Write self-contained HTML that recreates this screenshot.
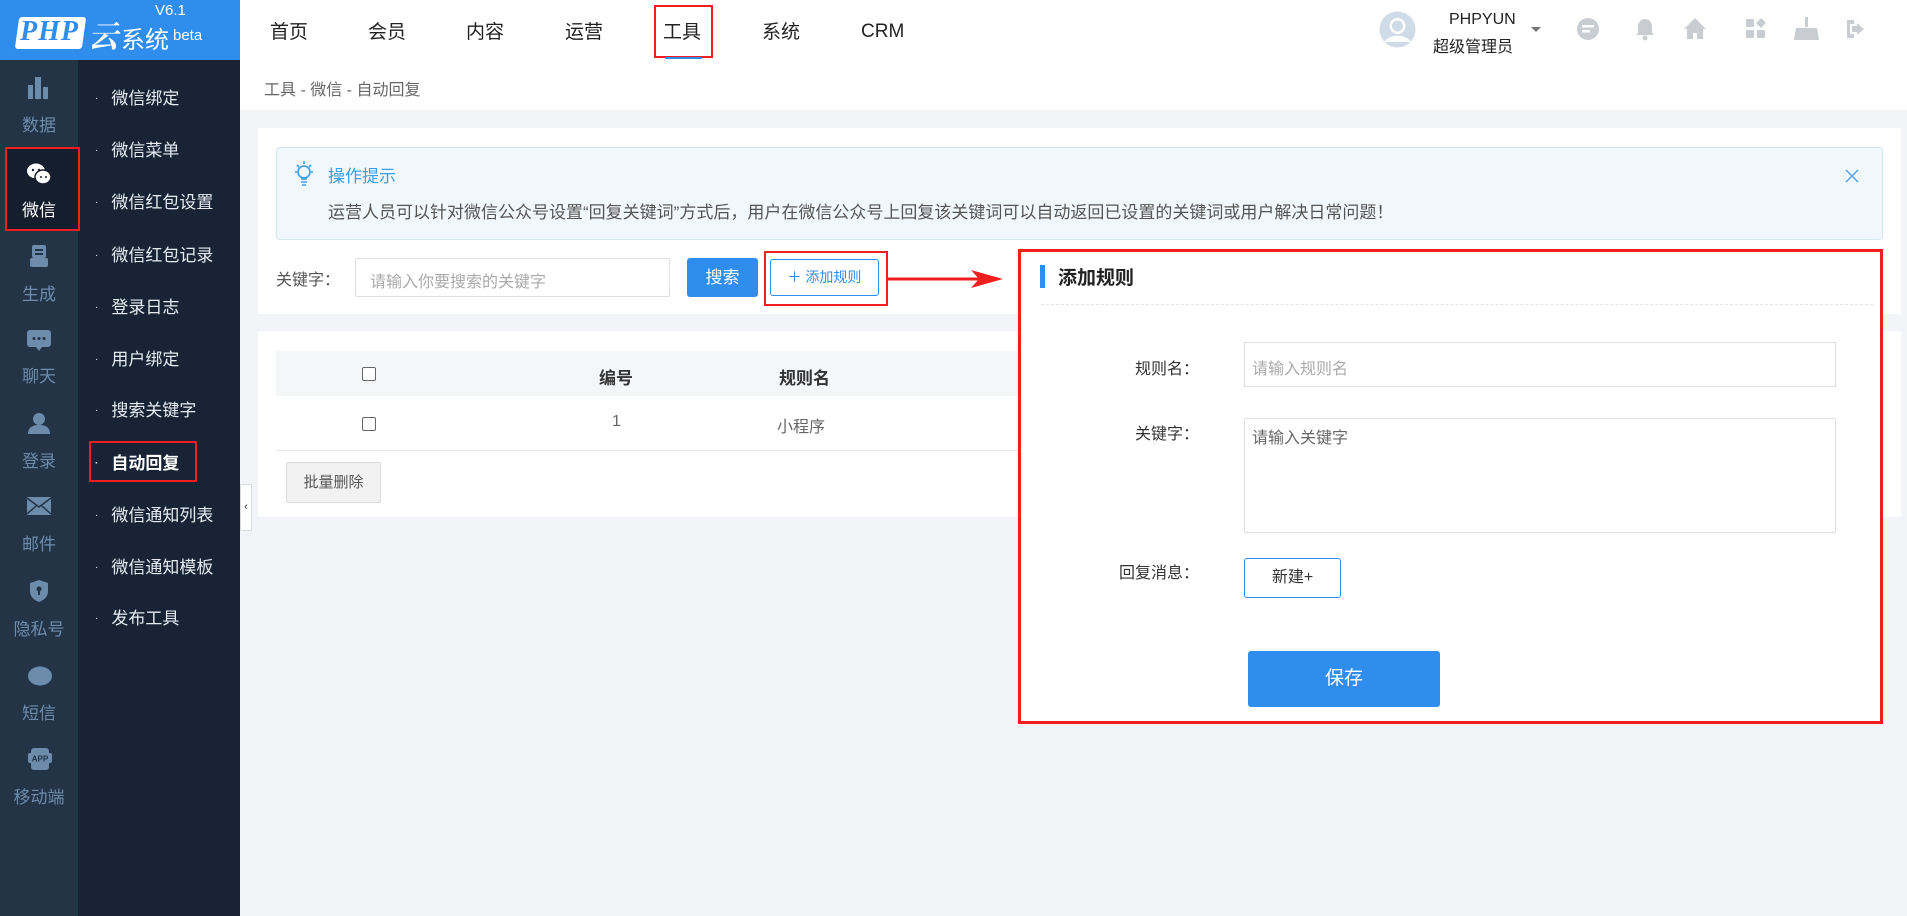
<!DOCTYPE html>
<html><head><meta charset="utf-8"><style>
*{margin:0;padding:0;box-sizing:border-box}
body{width:1907px;height:916px;overflow:hidden;background:#f2f4f7;font-family:"Liberation Sans","Noto Sans CJK SC",sans-serif;position:relative;color:#333}
.a{position:absolute}
.hdr{left:0;top:0;width:1907px;height:60px;background:#fff;box-shadow:0 2px 4px rgba(0,0,0,.06)}
.logo{left:0;top:0;width:240px;height:60px;background:#2f8ded}
.nav{top:17px;font-size:19px;color:#222}
.s1{left:0;top:60px;width:78px;height:856px;background:#243447}
.s2{left:78px;top:60px;width:162px;height:856px;background:#182436}
.ic{left:0;width:78px;text-align:center;color:#6d8bab;font-size:17px}
.sub{left:95px;color:#e6ebf1;font-size:17px}
.sub i{font-style:normal;font-size:10px;margin-right:13px;vertical-align:3px}
.red{border:2px solid #f01e1e}
.btnb{background:#2f8ded;color:#fff;border-radius:3px;text-align:center}
</style></head><body>
<div class="a hdr"></div>
<div class="a logo">
 <div class="a" style="left:17px;top:17px;width:67px;height:32px;background:#fff;border-radius:3px;transform:skewX(-8deg)"></div>
 <div class="a" style="left:20px;top:16px;font:italic bold 28px 'Liberation Serif',serif;color:#2f8ded;letter-spacing:1px">PHP</div>
 <div class="a" style="left:88px;top:12px;font:bold 30px 'Noto Serif CJK SC',serif;color:#fff;font-style:italic">云</div>
 <div class="a" style="left:121px;top:20px;font-size:24px;color:#fff">系统</div>
 <div class="a" style="left:173px;top:27px;font-size:15px;color:#fff">beta</div>
 <div class="a" style="left:155px;top:2px;font-size:15px;color:#fff">V6.1</div>
</div>
<div class="a nav" style="left:270px">首页</div>
<div class="a nav" style="left:368px">会员</div>
<div class="a nav" style="left:466px">内容</div>
<div class="a nav" style="left:565px">运营</div>
<div class="a nav" style="left:663px">工具</div>
<div class="a red" style="left:654px;top:5px;width:59px;height:53px"></div>
<div class="a" style="left:665px;top:57px;width:37px;height:2px;background:#2f8ded"></div>
<div class="a nav" style="left:762px">系统</div>
<div class="a nav" style="left:861px;top:21px">CRM</div>
<svg class="a" style="left:1379px;top:11px" width="37" height="37"><circle cx="18.5" cy="18.5" r="18" fill="#cfdbe6"/><circle cx="18.5" cy="15" r="8" fill="#fff"/><path d="M5 31a15 11 0 0 1 27 0" fill="#fff"/><circle cx="18.5" cy="15" r="5.5" fill="#cfdbe6"/></svg>
<div class="a" style="left:1449px;top:11px;font-size:16px;color:#222">PHPYUN</div>
<div class="a" style="left:1433px;top:33px;font-size:16px;color:#222">超级管理员</div>
<div class="a" style="left:1531px;top:27px;border:5px solid transparent;border-top-color:#777"></div>
<svg class="a" style="left:1572px;top:14px" width="300" height="30" fill="#c9ccd1">
<circle cx="16" cy="15" r="11"/><rect x="10" y="11" width="12" height="2.5" fill="#fff"/><rect x="10" y="16" width="8" height="2.5" fill="#fff"/>
<path d="M73 5c-5 0-7 4-7 8v6l-2 2h18l-2-2v-6c0-4-2-8-7-8z"/><circle cx="73" cy="24" r="2.5"/>
<path d="M123 4l-11 11h3v10h6v-6h4v6h6V15h3z"/>
<rect x="174" y="5" width="8" height="8" rx="1"/><rect x="174" y="16" width="8" height="8" rx="1"/><rect x="185" y="16" width="8" height="8" rx="1"/><path d="M189 4l5 5-5 5-5-5z"/>
<rect x="233" y="3" width="3" height="10"/><path d="M224 14h21l2 12h-25z"/>
<path d="M275 6h7v4h-4v10h4v4h-7z"/><path d="M285 9l7 6-7 6v-3h-5v-6h5z"/>
</svg>

<div class="a s1"></div><div class="a s2"></div>
<svg class="a" style="left:28px;top:77px" width="22" height="22" fill="#6d8bab"><rect x="0" y="8" width="5" height="14"/><rect x="7" y="0" width="6" height="22"/><rect x="15" y="10" width="5" height="12"/></svg>
<div class="a ic" style="top:111px">数据</div>
<div class="a" style="left:5px;top:147px;width:75px;height:84px;background:#141e2c"></div>
<div class="a red" style="left:5px;top:147px;width:75px;height:84px"></div>
<svg class="a" style="left:27px;top:163px" width="24" height="22" fill="#fff"><ellipse cx="9" cy="8" rx="9" ry="7.5"/><ellipse cx="16" cy="14" rx="8" ry="7" stroke="#141e2c" stroke-width="1.5"/><circle cx="6" cy="7" r="1.2" fill="#141e2c"/><circle cx="12" cy="7" r="1.2" fill="#141e2c"/><circle cx="14" cy="14" r="1" fill="#141e2c"/><circle cx="19" cy="14" r="1" fill="#141e2c"/></svg>
<div class="a ic" style="top:196px;color:#fff">微信</div>
<svg class="a" style="left:30px;top:245px" width="18" height="22" fill="#6d8bab"><rect x="2" y="0" width="14" height="13" rx="2"/><rect x="0" y="13" width="18" height="9" rx="2"/><rect x="5" y="4" width="8" height="2" fill="#243447"/><rect x="5" y="8" width="8" height="2" fill="#243447"/></svg>
<div class="a ic" style="top:280px">生成</div>
<svg class="a" style="left:27px;top:330px" width="24" height="22" fill="#6d8bab"><rect x="0" y="0" width="24" height="17" rx="3"/><path d="M9 17h6l-3 4z"/><circle cx="7" cy="8.5" r="1.5" fill="#243447"/><circle cx="12" cy="8.5" r="1.5" fill="#243447"/><circle cx="17" cy="8.5" r="1.5" fill="#243447"/></svg>
<div class="a ic" style="top:362px">聊天</div>
<svg class="a" style="left:28px;top:412px" width="22" height="22" fill="#6d8bab"><circle cx="11" cy="7" r="6"/><path d="M0 22c0-7 5-9 11-9s11 2 11 9z"/></svg>
<div class="a ic" style="top:447px">登录</div>
<svg class="a" style="left:27px;top:497px" width="24" height="18"><rect width="24" height="18" fill="#6d8bab"/><path d="M0 1l12 9 12-9M0 17l9-8M24 17l-9-8" stroke="#243447" stroke-width="1.5" fill="none"/></svg>
<div class="a ic" style="top:530px">邮件</div>
<svg class="a" style="left:30px;top:580px" width="18" height="22" fill="#6d8bab"><path d="M9 0l9 3v8c0 6-4 9-9 11-5-2-9-5-9-11V3z"/><circle cx="9" cy="9" r="2.5" fill="#243447"/><rect x="8" y="10" width="2" height="5" fill="#243447"/></svg>
<div class="a ic" style="top:615px">隐私号</div>
<svg class="a" style="left:28px;top:666px" width="24" height="20" fill="#6d8bab"><ellipse cx="12" cy="10" rx="12" ry="9.5"/></svg>
<div class="a ic" style="top:699px">短信</div>
<svg class="a" style="left:28px;top:748px" width="24" height="22" fill="#6d8bab"><rect x="3" y="0" width="18" height="22" rx="3"/><rect x="0" y="5" width="24" height="10" rx="2"/><text x="12" y="13.5" font-size="8" font-weight="bold" text-anchor="middle" fill="#243447" font-family="Liberation Sans">APP</text></svg>
<div class="a ic" style="top:783px">移动端</div>

<div class="a sub" style="top:84px"><i>·</i>微信绑定</div>
<div class="a sub" style="top:136px"><i>·</i>微信菜单</div>
<div class="a sub" style="top:188px"><i>·</i>微信红包设置</div>
<div class="a sub" style="top:241px"><i>·</i>微信红包记录</div>
<div class="a sub" style="top:293px"><i>·</i>登录日志</div>
<div class="a sub" style="top:345px"><i>·</i>用户绑定</div>
<div class="a sub" style="top:396px"><i>·</i>搜索关键字</div>
<div class="a sub" style="top:449px;font-weight:bold;color:#fff"><i>·</i>自动回复</div>
<div class="a red" style="left:89px;top:441px;width:108px;height:41px"></div>
<div class="a sub" style="top:501px"><i>·</i>微信通知列表</div>
<div class="a sub" style="top:553px"><i>·</i>微信通知模板</div>
<div class="a sub" style="top:604px"><i>·</i>发布工具</div>

<div class="a" style="left:240px;top:60px;width:1667px;height:50px;background:#fff"></div>
<div class="a" style="left:264px;top:76px;font-size:16px;color:#666">工具 - 微信 - 自动回复</div>

<div class="a" style="left:258px;top:128px;width:1643px;height:186px;background:#fff"></div>
<div class="a" style="left:276px;top:147px;width:1607px;height:93px;background:#f0f7fd;border:1px solid #d3e6f8;border-radius:4px"></div>
<svg class="a" style="left:293px;top:160px" width="22" height="28" fill="none" stroke="#3a9ee8" stroke-width="1.6"><circle cx="11" cy="12" r="6"/><path d="M8 19h6M8 22h6M9 25h4M11 1v3M2 12h2M18 12h2M4 5l2 2M18 5l-2 2"/></svg>
<div class="a" style="left:328px;top:162px;font-size:17px;color:#3a9ee8">操作提示</div>
<div class="a" style="left:328px;top:198px;font-size:17px;color:#555">运营人员可以针对微信公众号设置“回复关键词”方式后，用户在微信公众号上回复该关键词可以自动返回已设置的关键词或用户解决日常问题！</div>
<svg class="a" style="left:1845px;top:169px" width="14" height="14" stroke="#5aa6e8" stroke-width="1.5"><path d="M1 1l12 12M13 1L1 13"/></svg>
<div class="a" style="left:276px;top:266px;font-size:16px;color:#555">关键字：</div>
<div class="a" style="left:355px;top:258px;width:315px;height:39px;border:1px solid #dcdfe4;border-radius:2px;background:#fff;font-size:16px;color:#aaa;padding:9px 14px">请输入你要搜索的关键字</div>
<div class="a btnb" style="left:687px;top:258px;width:71px;height:39px;font-size:17px;line-height:39px">搜索</div>
<div class="a" style="left:770px;top:259px;width:109px;height:37px;border:1px solid #2f8ded;border-radius:3px;color:#2f8ded;font-size:14px;text-align:center;line-height:35px">＋ 添加规则</div>
<div class="a red" style="left:764px;top:251px;width:124px;height:55px"></div>
<svg class="a" style="left:886px;top:268px" width="120" height="22"><path d="M0 11h95" stroke="#f01e1e" stroke-width="3"/><path d="M85 2l32 9-32 9 8-9z" fill="#f01e1e"/></svg>

<div class="a" style="left:258px;top:331px;width:1643px;height:186px;background:#fff"></div>
<div class="a" style="left:276px;top:351px;width:760px;height:45px;background:#f5f6f8"></div>
<div class="a" style="left:362px;top:367px;width:14px;height:14px;border:1px solid #666;border-radius:2px;background:#fff"></div>
<div class="a" style="left:599px;top:364px;font-size:17px;font-weight:bold;color:#333">编号</div>
<div class="a" style="left:779px;top:364px;font-size:17px;font-weight:bold;color:#333">规则名</div>
<div class="a" style="left:362px;top:417px;width:14px;height:14px;border:1px solid #666;border-radius:2px"></div>
<div class="a" style="left:612px;top:413px;font-size:16px;color:#666">1</div>
<div class="a" style="left:777px;top:413px;font-size:16px;color:#666">小程序</div>
<div class="a" style="left:276px;top:450px;width:760px;height:1px;background:#e4e6ea"></div>
<div class="a" style="left:286px;top:462px;width:95px;height:41px;background:#f2f2f2;border:1px solid #ddd;border-radius:2px;font-size:15px;color:#555;text-align:center;line-height:39px">批量删除</div>
<div class="a" style="left:240px;top:484px;width:12px;height:47px;background:#fff;border:1px solid #ddd;font-size:11px;color:#333;line-height:45px;text-align:center">‹</div>

<div class="a" style="left:1018px;top:249px;width:865px;height:475px;background:#fff;border:3px solid #f01e1e"></div>
<div class="a" style="left:1040px;top:265px;width:5px;height:23px;background:#2f8ded"></div>
<div class="a" style="left:1058px;top:263px;font-size:19px;font-weight:bold;color:#222">添加规则</div>
<div class="a" style="left:1041px;top:304px;width:832px;border-top:1px dashed #e2e4e8"></div>
<div class="a" style="left:1135px;top:355px;font-size:16px;color:#333">规则名：</div>
<div class="a" style="left:1244px;top:342px;width:592px;height:45px;border:1px solid #dcdfe4;font-size:16px;color:#aaa;padding:12px 7px">请输入规则名</div>
<div class="a" style="left:1135px;top:420px;font-size:16px;color:#333">关键字：</div>
<div class="a" style="left:1244px;top:418px;width:592px;height:115px;border:1px solid #dcdfe4;border-radius:2px;font-size:16px;color:#666;padding:5px 7px">请输入关键字</div>
<div class="a" style="left:1119px;top:559px;font-size:16px;color:#333">回复消息：</div>
<div class="a" style="left:1244px;top:558px;width:97px;height:40px;border:1px solid #2f8ded;border-radius:3px;font-size:16px;color:#333;text-align:center;line-height:38px">新建+</div>
<div class="a btnb" style="left:1248px;top:651px;width:192px;height:56px;font-size:19px;line-height:56px">保存</div>
</body></html>
